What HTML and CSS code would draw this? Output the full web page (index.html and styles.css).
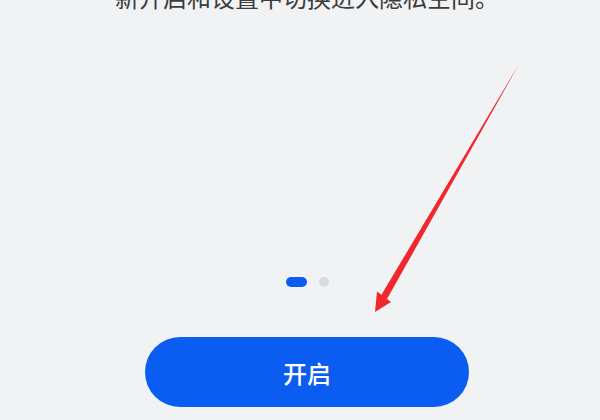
FILE: index.html
```html
<!DOCTYPE html>
<html lang="zh">
<head>
<meta charset="utf-8">
<link rel="stylesheet" href="styles.css">
</head>
<body>
<div class="page">
  <p class="desc">新开启和设置中切换进入隐私空间。</p>
  <div class="dots">
    <span class="dot active"></span>
    <span class="dot"></span>
  </div>
  <button class="btn">开启</button>
</div>
<svg class="arrow" width="600" height="420" viewBox="0 0 600 420">
  <polygon points="518.5,65 387,299 381,295.5" fill="#f0282d"/>
  <polygon points="375,312 377,291.5 391,302" fill="#f0282d"/>
</svg>
</body>
</html>
```

FILE: styles.css
```css
html, body {
  margin: 0;
  padding: 0;
  background: #f1f2f4;
  width: 600px;
  height: 420px;
  overflow: hidden;
}
body {
  position: relative;
  font-family: "Noto Sans CJK SC", "Noto Sans", sans-serif;
}
.page {
  display: flex;
  flex-direction: column;
  align-items: center;
  height: 420px;
  padding-left: 14px;
  box-sizing: border-box;
}
.desc {
  margin: -15px 0 0 0;
  font-size: 24px;
  line-height: 24px;
  height: 24px;
  color: #3c3c3c;
  white-space: nowrap;
}
.dots {
  margin-top: 268px;
  display: flex;
  gap: 12px;
  height: 10px;
}
.dot {
  width: 10px;
  height: 10px;
  border-radius: 5px;
  background: #dadbdd;
}
.dot.active {
  width: 21px;
  background: #0b5cf1;
}
.btn {
  margin-top: 50px;
  width: 324px;
  height: 70px;
  border: none;
  border-radius: 35px;
  background: #0b5cf1;
  color: #ffffff;
  font-family: "Noto Sans CJK SC", "Noto Sans", sans-serif;
  font-size: 24px;
  font-weight: 500;
  padding: 0;
}
.arrow {
  position: absolute;
  left: 0;
  top: 0;
}
```
